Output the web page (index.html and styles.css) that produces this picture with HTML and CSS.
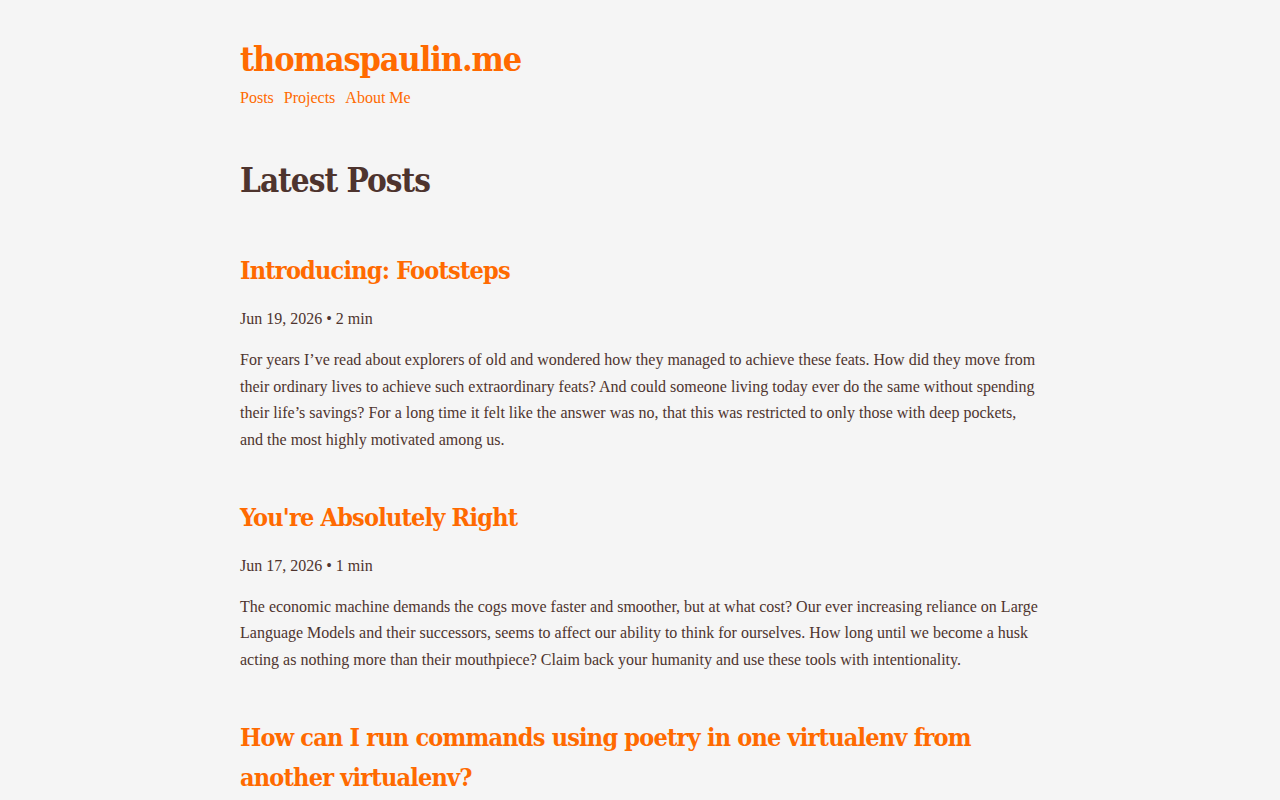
FILE: index.html
```html
<!DOCTYPE html>
<html lang="en">
<head>
<meta charset="utf-8">
<title>thomaspaulin.me</title>
<link rel="stylesheet" href="styles.css">
</head>
<body>
<div class="wrap">
  <header class="site-header">
    <a class="site-title" href="#">thomaspaulin.me</a>
    <nav class="nav">
      <a href="#">Posts</a>
      <a href="#">Projects</a>
      <a href="#">About Me</a>
    </nav>
  </header>
  <main>
    <h1 class="page-title">Latest Posts</h1>
    <article class="post">
      <h2 class="post-title"><a href="#">Introducing: Footsteps</a></h2>
      <p class="meta">Jun 19, 2026 • 2 min</p>
      <p class="summary">For years I’ve read about explorers of old and wondered how they managed to achieve these feats. How did they move from their ordinary lives to achieve such extraordinary feats? And could someone living today ever do the same without spending their life’s savings? For a long time it felt like the answer was no, that this was restricted to only those with deep pockets, and the most highly motivated among us.</p>
    </article>
    <article class="post">
      <h2 class="post-title"><a href="#">You're Absolutely Right</a></h2>
      <p class="meta">Jun 17, 2026 • 1 min</p>
      <p class="summary">The economic machine demands the cogs move faster and smoother, but at what cost? Our ever increasing reliance on Large Language Models and their successors, seems to affect our ability to think for ourselves. How long until we become a husk acting as nothing more than their mouthpiece? Claim back your humanity and use these tools with intentionality.</p>
    </article>
    <article class="post">
      <h2 class="post-title"><a href="#">How can I run commands using poetry in one virtualenv from another virtualenv?</a></h2>
      <p class="meta">Jun 10, 2026 • 3 min</p>
    </article>
  </main>
</div>
</body>
</html>
```
FILE: styles.css
```css
html, body {
  margin: 0;
  padding: 0;
  background: #f5f5f5;
}
body {
  font-family: "Liberation Serif", "Times New Roman", serif;
  font-size: 16px;
  color: #4e342e;
}
a {
  color: #ff6a00;
  text-decoration: none;
}
.wrap {
  width: 800px;
  margin: 0 auto;
  padding-top: 37px;
}
.site-header {
  display: flex;
  flex-direction: column;
}
.site-title {
  font-family: "DejaVu Serif Condensed", "DejaVu Serif", Georgia, serif;
  font-stretch: condensed;
  font-weight: bold;
  font-size: 34px;
  letter-spacing: -1.1px;
  line-height: 44px;
}
.nav {
  display: flex;
  gap: 10px;
  margin-top: 7px;
  line-height: 20px;
}
.page-title {
  font-family: "DejaVu Serif Condensed", "DejaVu Serif", Georgia, serif;
  font-stretch: condensed;
  font-weight: bold;
  font-size: 33px;
  letter-spacing: -1px;
  line-height: 44px;
  margin: 51px 0 48px;
}
.post {
  margin-bottom: 44px;
}
.post-title {
  font-family: "DejaVu Serif Condensed", "DejaVu Serif", Georgia, serif;
  font-stretch: condensed;
  font-weight: bold;
  font-size: 25px;
  letter-spacing: -0.8px;
  line-height: 40px;
  margin: 0 0 16px;
}
.meta {
  margin: 0 0 16px;
  line-height: 24px;
}
.summary {
  margin: 0;
  line-height: 26.67px;
}
```
